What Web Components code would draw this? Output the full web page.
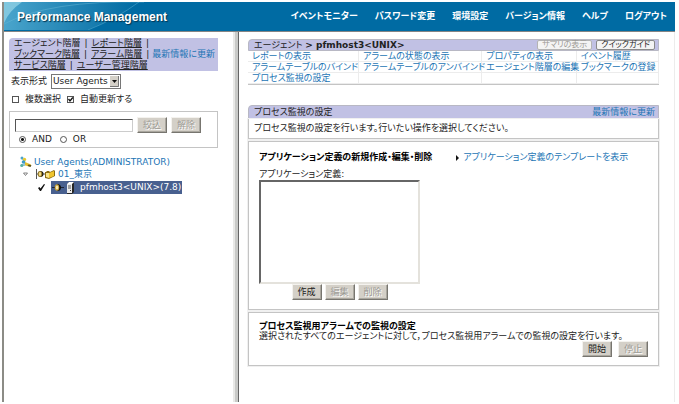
<!DOCTYPE html>
<html lang="ja">
<head>
<meta charset="utf-8">
<title>Performance Management</title>
<style>
  html { background: #fff; }
  body {
    margin: 0;
    font: 9px/11px "DejaVu Sans", "Noto Sans CJK JP", sans-serif;
    font-feature-settings: "palt";
    color: #222;
    --link: #1c75b5;
    --bar: #c1c1e4;
    --line: #c4c4c4;
    --face: #d4d0c8;
  }
</style>
</head>
<body>
<pfm-app>
  <pfm-header slot="header"></pfm-header>
  <pfm-sidebar slot="side"></pfm-sidebar>
  <pfm-main></pfm-main>
</pfm-app>

<script>
(function() {
  // shared by every shadow root
  const base = `
    * { box-sizing: border-box; }
    a { color: var(--link); text-decoration: none; }
    label { white-space: nowrap; }
    input, select, button { font: inherit; font-feature-settings: inherit; color: inherit; margin: 0; }
  `;

  function define(name, html) {
    customElements.define(name, class extends HTMLElement {
      constructor() {
        super();
        this.attachShadow({ mode: "open" });
        this.shadowRoot.innerHTML = `<style>${base}</style>${html}`;
      }
    });
  }

  define("pfm-app", `
    <style>
      :host {
        display: grid;
        grid-template: auto 1fr / minmax(229px, 34%) 6px 1fr;
        min-height: calc(100vh - 4px);
        margin: 2px 4px 2px 2px;
        border-left: 2px solid #8c8c86;
      }
      header { grid-column: 1 / -1; }
      .split {
        background: linear-gradient(to right, #e9e9e7 0 2px, #c9cac8 2px 5px, #666 5px);
      }
      main { border-right: 1px solid #ececec; min-width: 0; }
    </style>
    <header><slot name="header"></slot></header>
    <aside><slot name="side"></slot></aside>
    <div class="split"></div>
    <main><slot></slot></main>
  `);

  define("pfm-header", `
    <style>
      :host {
        display: grid;
        height: 29px;
        background: #006ba3;
        border-bottom: 1px solid #858585;
        color: #fff;
      }
      :host > * { grid-area: 1 / 1; }
      .bar { display: flex; align-items: center; justify-content: space-between; padding: 0 8px 0 13px; }
      h1 { margin: 0; font: bold 12px/16px "Liberation Sans", sans-serif; text-shadow: 1px 1px 1px #00344f; }
      nav { display: flex; gap: 17px; font-weight: bold; }
      nav a { color: inherit; white-space: nowrap; }
    </style>
    <svg width="232" height="28" viewBox="0 0 232 28" aria-hidden="true">
      <defs>
        <linearGradient id="shine"><stop offset="0" stop-color="#4aa5cc"/><stop offset=".5" stop-color="#2385b5"/><stop offset="1" stop-color="#006ba3"/></linearGradient>
      </defs>
      <path d="M0 0H135Q112 17 84 28H0Z" fill="url(#shine)"/>
      <path d="M0 0H18Q5 9 0 21Z" fill="#8fd0e4" opacity=".8"/>
      <path d="M0 22Q45 -2 140 0" fill="none" stroke="#68b7d5" opacity=".5"/>
      <path d="M84 28Q112 17 135 0" fill="none" stroke="#4ba4ca" opacity=".6"/>
    </svg>
    <div class="bar">
      <h1>Performance Management</h1>
      <nav>
        <a href="#">イベントモニター</a>
        <a href="#">パスワード変更</a>
        <a href="#">環境設定</a>
        <a href="#">バージョン情報</a>
        <a href="#">ヘルプ</a>
        <a href="#">ログアウト</a>
      </nav>
    </div>
  `);

  // grey raised push button, or the small rounded one with kind="round"
  customElements.define("pfm-button", class extends HTMLElement {
    constructor() {
      super();
      this.attachShadow({ mode: "open" });
      this.shadowRoot.innerHTML = `
        <style>
          ${base}
          :host { display: inline-flex; }
          button {
            min-width: 30px;
            height: 16px;
            padding: 0 4px;
            line-height: 12px;
            white-space: nowrap;
            background: var(--face);
            border: 1px solid;
            border-color: #f4f2ee #77756f #77756f #f4f2ee;
            box-shadow: inset -1px -1px #aaa79f;
          }
          button:disabled { color: #9c9a94; text-shadow: 1px 1px #fff; }
          :host([kind=round]) button {
            height: 10px;
            line-height: 8px;
            font-size: 8px;
            background: #f4f4f4;
            border-color: #8a8a8a;
            border-radius: 2px;
            box-shadow: none;
          }
          :host([kind=round]) button:disabled { border-color: #b4b4b4; text-shadow: none; }
        </style>
        <button type="button"><slot></slot></button>
      `;
      this.shadowRoot.querySelector("button").disabled = this.hasAttribute("disabled");
    }
  });

  define("pfm-sidebar", `
    <style>
      :host { display: block; padding: 6px 15px 8px 5px; }
      .views {
        display: flex;
        align-items: center;
        justify-content: space-between;
        padding: 0 3px 0 5px;
        background: var(--bar);
        border-radius: 4px 0 0 0;
        white-space: nowrap;
      }
      .views nav a { color: #222; text-decoration: underline; }
      .views nav div { display: flex; gap: 4px; }
      .format { display: flex; align-items: center; gap: 4px; margin-top: 3px; padding-left: 2px; }
      .combo { display: grid; }
      .combo > * { grid-area: 1 / 1; }
      select {
        appearance: none;
        height: 15px;
        padding: 0 12px 0 1px;
        background: #fff;
        border: 1px solid #777;
        border-radius: 0;
      }
      .combo svg { justify-self: end; align-self: center; margin-right: 2px; pointer-events: none; }
      .checks { display: flex; align-items: center; gap: 6px; margin: 5px 0 6px; padding-left: 3px; }
      label.tick { display: inline-flex; align-items: center; gap: 6px; }
      input[type=checkbox], input[type=radio] {
        appearance: none;
        width: 7px;
        height: 7px;
        border: 1px solid #555;
        background: #fff;
      }
      input[type=radio] { border-radius: 50%; }
      input[type=radio]:checked { background: radial-gradient(circle, #111 0 1px, #fff 2px); }
      .tick span { display: grid; }
      .tick span > * { grid-area: 1 / 1; }
      .filter { border: 1px solid var(--line); padding: 5px 5px 2px; }
      .find { display: flex; align-items: center; gap: 4px; }
      input[type=text] {
        width: 118px;
        height: 13px;
        border: 1px solid;
        border-color: #555 #ccc #ccc #555;
        padding: 0 2px;
      }
      .modes { display: flex; gap: 8px; padding: 1px 4px 0; }
    </style>
    <div class="views">
      <nav>
        <div><span>エージェント階層</span><span>|</span><a href="#">レポート階層</a><span>|</span></div>
        <div><a href="#">ブックマーク階層</a><span>|</span><a href="#">アラーム階層</a><span>|</span></div>
        <div><a href="#">サービス階層</a><span>|</span><a href="#">ユーザー管理階層</a></div>
      </nav>
      <a href="#">最新情報に更新</a>
    </div>
    <div class="format">
      <label for="format">表示形式</label>
      <div class="combo">
        <select id="format"><option>User Agents</option></select>
        <svg width="9" height="11" viewBox="0 0 9 11" aria-hidden="true"><path d="M0 0h9v11H0z" fill="#d4d0c8"/><path d="M8.500 0v10.500H0" fill="none" stroke="#777"/><path d="M2 4h5L4.500 7z" fill="#111"/></svg>
      </div>
    </div>
    <div class="checks">
      <label class="tick"><input type="checkbox">複数選択</label>
      <label class="tick"><span><input type="checkbox" checked><svg width="7" height="7" viewBox="0 0 7 7" aria-hidden="true"><path d="M1.500 3 3 5 5.800 1.500" fill="none" stroke="#111" stroke-width="1.300"/></svg></span>自動更新する</label>
    </div>
    <div class="filter">
      <div class="find">
        <input type="text" aria-label="絞込">
        <pfm-button disabled>絞込</pfm-button>
        <pfm-button disabled>解除</pfm-button>
      </div>
      <div class="modes">
        <label class="tick"><input type="radio" name="mode" checked>AND</label>
        <label class="tick"><input type="radio" name="mode">OR</label>
      </div>
    </div>
    <pfm-tree></pfm-tree>
  `);

  define("pfm-tree", `
    <style>
      :host { display: block; margin-top: 8px; padding-left: 11px; }
      ul { list-style: none; margin: 0; padding: 0; }
      a { white-space: nowrap; }
      .row { display: flex; align-items: center; height: 12px; gap: 2px; }
      .child { padding-left: 3px; }
      .leaf { padding-left: 18px; gap: 6px; height: 14px; }
      .picked {
        display: flex;
        align-items: center;
        gap: 5px;
        height: 13px;
        padding: 0 1px;
        background: #48608f;
        color: #fff;
      }
    </style>
    <ul>
      <li>
        <div class="row">
          <svg width="12" height="12" viewBox="0 0 12 12" aria-hidden="true">
            <path d="M2 2 5 6M3 6 6 8M1 9h4" stroke="#2f88b4" fill="none"/>
            <circle cx="2" cy="2" r="1.500" fill="#4ca4c9"/><circle cx="4.500" cy="3.500" r="1.700" fill="#e8c92e"/>
            <circle cx="3.500" cy="6" r="1.800" fill="#3f9cc6"/><circle cx="1.800" cy="9.500" r="1.600" fill="#58b0a2"/>
            <path d="M5 6 11 8.500 10.500 10.500 5 9.500z" fill="#e5bd2a"/><path d="M8.500 8.500l3 .8-1 1.700-3-1z" fill="#5d5120"/>
          </svg>
          <a href="#">User Agents(ADMINISTRATOR)</a>
        </div>
        <ul>
          <li>
            <div class="row child">
              <svg width="33" height="12" viewBox="0 0 33 12" aria-hidden="true">
                <path d="M.5 5h4L2.500 7.500z" fill="#fff" stroke="#666" stroke-width=".8"/>
                <path d="M13.500 1v10M14 6h8" stroke="#555"/>
                <path d="M17 3q3.500 0 3.500 3T17 9z" fill="#111"/>
                <ellipse cx="17" cy="6" rx="2.300" ry="3" fill="#8f7322"/><ellipse cx="17" cy="6" rx="1.300" ry="2" fill="#f3dc8a"/>
                <path d="M22 4h1l1-1h2l1 1 4-2 1 1v5l-6 3-4-1z" fill="#8a6b12"/>
                <path d="M23 5h3v5l-3-1z" fill="#fbe58a"/><path d="M26 5l5-2v5l-5 2z" fill="#f0c52f"/>
              </svg>
              <a href="#">01_東京</a>
            </div>
            <ul>
              <li class="row leaf">
                <svg width="7" height="7" viewBox="0 0 7 7" role="img" aria-hidden="true"><path d="M0 4 1.500 3 2.500 4.500 6 0 7 .5 3 7H2z" fill="#111"/></svg>
                <a class="picked" href="#">
                  <svg width="23" height="13" viewBox="0 0 23 13" aria-hidden="true">
                    <path d="M0 6.500h12" stroke="#1d2433"/>
                    <path d="M5 3q4 0 4 3.500T5 10z" fill="#111"/><ellipse cx="5" cy="6.500" rx="2.200" ry="3.300" fill="#c39e38"/><ellipse cx="5" cy="6.500" rx="1.300" ry="2" fill="#f8eab4"/>
                    <path d="M15 3l2-2h5v10l-2 2h-5z" fill="#262626"/><path d="M15 3h5v9h-5z" fill="#ececec"/>
                    <path d="M15 3l2-2h5l-2 2z" fill="#fff"/><path d="M16 5h3M16 7h3" stroke="#555"/><path d="M18 9h1v1h-1z" fill="#333"/>
                  </svg>
                  <span>pfmhost3&lt;UNIX&gt;(7.8)</span>
                </a>
              </li>
            </ul>
          </li>
        </ul>
      </li>
    </ul>
  `);

  define("pfm-titlebar", `
    <style>
      :host {
        display: flex;
        align-items: center;
        justify-content: space-between;
        min-height: 12px;
        padding: 0 3px 0 5px;
        background: var(--bar);
        border: 1px solid #b8b8c4;
        border-radius: 4px 0 0 0;
        line-height: 10px;
        box-sizing: border-box;
      }
      .tools { display: flex; gap: 4px; white-space: nowrap; }
    </style>
    <slot></slot>
    <div class="tools"><slot name="tools"></slot></div>
  `);

  define("pfm-panel", `
    <style>
      :host { display: block; border: 1px solid var(--line); outline: 1px solid #f0f0f0; }
    </style>
    <slot></slot>
  `);

  define("pfm-main", `
    <style>
      :host { display: block; padding: 7px 15px 10px 9px; }
      h2, h3 { margin: 0; font: inherit; }
      h3 { font-weight: bold; color: #000; }
      b { font-weight: bold; }
      p { margin: 0; }
      table { width: 100%; table-layout: fixed; border-spacing: 0; border-bottom: 1px solid var(--line); }
      td { height: 11px; padding: 0 0 0 4px; border: 1px solid #ececec; border-width: 0 1px 1px 0; line-height: 10px; white-space: nowrap; }
      .c1 { width: 27%; }
      .c2 { width: 30%; }
      .c3 { width: 23%; }
      .block { margin-top: 20px; min-height: 14px; }
      .note { padding: 4px 5px; border-top: 0; }
      .apps { margin-top: 2px; padding: 10px 10px 9px; }
      .head { display: flex; align-items: center; gap: 24px; }
      .head a { display: flex; align-items: center; gap: 4px; }
      .pick { display: flex; flex-direction: column; width: max-content; margin-top: 6px; }
      select {
        width: 161px;
        height: 104px;
        background: #fff;
        border: 2px solid;
        border-color: #666 #e4e2dc #e4e2dc #666;
        border-radius: 0;
      }
      .buttons { display: flex; gap: 3px; justify-content: center; }
      .alarm { margin-top: 2px; padding: 8px 10px; line-height: 10px; }
      .end { display: flex; gap: 6px; justify-content: flex-end; }
    </style>
    <pfm-titlebar>
      <h2>エージェント <b>&gt; pfmhost3&lt;UNIX&gt;</b></h2>
      <pfm-button slot="tools" kind="round" disabled>サマリの表示</pfm-button>
      <pfm-button slot="tools" kind="round">クイックガイド</pfm-button>
    </pfm-titlebar>
    <table>
      <colgroup><col class="c1"><col class="c2"><col class="c3"><col></colgroup>
      <tr><td><a href="#">レポートの表示</a></td><td><a href="#">アラームの状態の表示</a></td><td><a href="#">プロパティの表示</a></td><td><a href="#">イベント履歴</a></td></tr>
      <tr><td><a href="#">アラームテーブルのバインド</a></td><td><a href="#">アラームテーブルのアンバインド</a></td><td><a href="#">エージェント階層の編集</a></td><td><a href="#">ブックマークの登録</a></td></tr>
      <tr><td><a href="#">プロセス監視の設定</a></td><td></td><td></td><td></td></tr>
    </table>
    <pfm-titlebar class="block">
      <h2>プロセス監視の設定</h2>
      <a slot="tools" href="#">最新情報に更新</a>
    </pfm-titlebar>
    <pfm-panel class="note"><p>プロセス監視の設定を行います。行いたい操作を選択してください。</p></pfm-panel>
    <pfm-panel class="apps">
      <div class="head">
        <h3>アプリケーション定義の新規作成・編集・削除</h3>
        <a href="#"><svg width="3" height="6" viewBox="0 0 3 6" aria-hidden="true"><path d="M0 0 3 3 0 6z" fill="#111"/></svg>アプリケーション定義のテンプレートを表示</a>
      </div>
      <div class="pick">
        <label for="apps">アプリケーション定義:</label>
        <select id="apps" size="8"></select>
        <div class="buttons">
          <pfm-button>作成</pfm-button>
          <pfm-button disabled>編集</pfm-button>
          <pfm-button disabled>削除</pfm-button>
        </div>
      </div>
    </pfm-panel>
    <pfm-panel class="alarm">
      <h3>プロセス監視用アラームでの監視の設定</h3>
      <p>選択されたすべてのエージェントに対して，プロセス監視用アラームでの監視の設定を行います。</p>
      <div class="end">
        <pfm-button>開始</pfm-button>
        <pfm-button disabled>停止</pfm-button>
      </div>
    </pfm-panel>
  `);
})();
</script>
</body>
</html>
